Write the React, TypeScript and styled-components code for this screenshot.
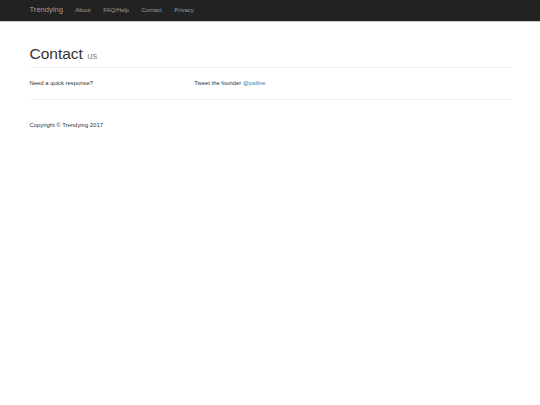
import React from "react";
import styled, { createGlobalStyle } from "styled-components";

const GlobalStyles = createGlobalStyle`
  html, body {
    margin: 0;
    padding: 0;
    background: #fff;
  }
  body {
    font-family: "Liberation Sans", Arial, sans-serif;
    font-size: 5.9px;
    line-height: 1.42857;
    color: #333;
  }
  * {
    box-sizing: border-box;
  }
`;

const navLinks = ["About", "FAQ/Help", "Contact", "Privacy"];

export default function App() {
  return (
    <>
      <GlobalStyles />
      <Navbar>
        <Container>
          <Brand href="#">Trendying</Brand>
          <NavList>
            {navLinks.map((l) => (
              <NavItem key={l}>
                <NavLink href="#">{l}</NavLink>
              </NavItem>
            ))}
          </NavList>
        </Container>
      </Navbar>

      <Main>
        <PageHeader>
          <Title>
            Contact <Small>us</Small>
          </Title>
        </PageHeader>

        <Row>
          <Col $span={4}>Need a quick response?</Col>
          <Col $span={8}>
            Tweet the founder <Link href="#">@psilive</Link>
          </Col>
        </Row>

        <Rule />

        <Footer>Copyright © Trendying 2017</Footer>
      </Main>
    </>
  );
}

const Navbar = styled.nav`
  height: 22px;
  background-color: #222;
  border-bottom: 1px solid #c8c8c8;
`;

const Container = styled.div`
  width: 494px;
  margin: 0 auto;
  padding: 0 6.5px;
  display: flex;
  align-items: center;
  height: 21px;
`;

const Brand = styled.a`
  font-size: 7.6px;
  color: #9d9d9d;
  text-decoration: none;
  padding-right: 6px;
`;

const NavList = styled.ul`
  display: flex;
  list-style: none;
  margin: 0;
  padding: 0;
`;

const NavItem = styled.li``;

const NavLink = styled.a`
  display: block;
  padding: 0 6.3px;
  color: #9d9d9d;
  text-decoration: none;
  font-size: 5.9px;
`;

const Main = styled.div`
  width: 494px;
  margin: 0 auto;
  padding: 0 6.5px;
`;

const PageHeader = styled.div`
  margin-top: 23px;
  padding-bottom: 5px;
  border-bottom: 1px solid #eee;
`;

const Title = styled.h1`
  margin: 0;
  font-size: 15.5px;
  font-weight: 400;
  line-height: 1.1;
  color: #333;
`;

const Small = styled.small`
  font-size: 62%;
  color: #8c8c8c;
`;

const Row = styled.div`
  display: flex;
  margin: 0 -6.5px;
  padding: 11px 0 4px;
`;

const Col = styled.div<{ $span: number }>`
  width: ${({ $span }) => ($span / 12) * 100}%;
  padding: 0 6.5px;
  line-height: 8.4px;
`;

const Link = styled.a`
  color: #337ab7;
  text-decoration: none;
`;

const Rule = styled.hr`
  margin: 8px 0 0;
  border: 0;
  border-top: 1px solid #eee;
`;

const Footer = styled.footer`
  padding-top: 21px;
  line-height: 8.4px;
`;
